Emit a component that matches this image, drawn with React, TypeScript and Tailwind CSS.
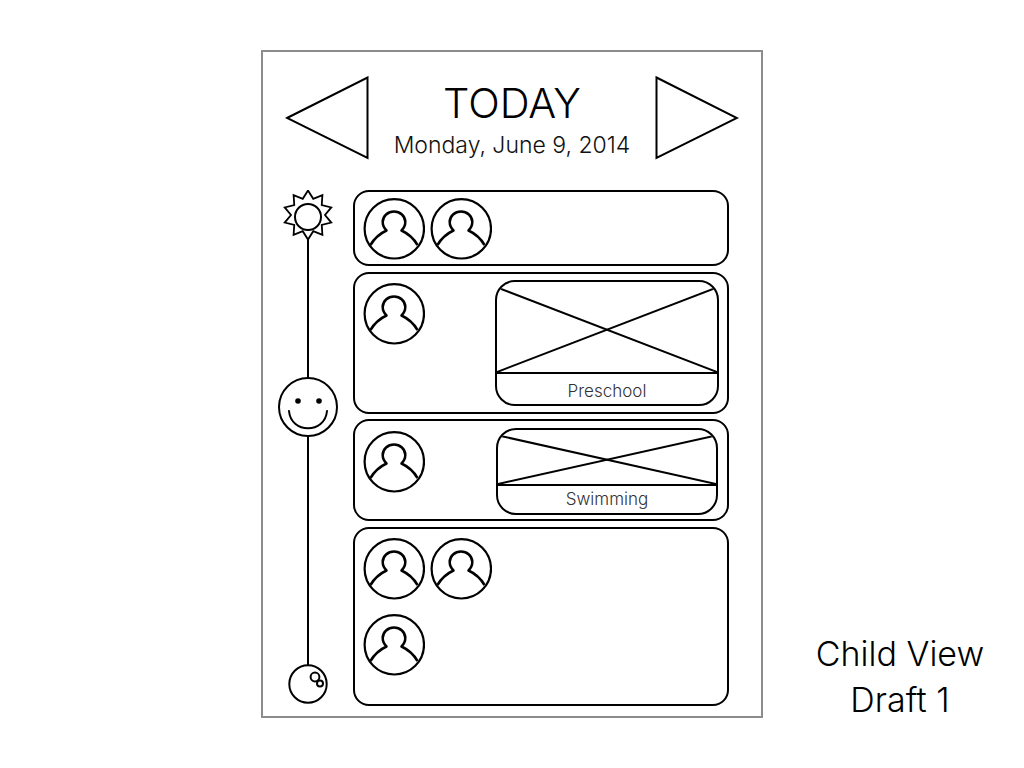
const font = "font-['Inter','Liberation_Sans',sans-serif] font-light";

function Avatar({ className = "" }: { className?: string }) {
  return (
    <svg width="62" height="62" viewBox="0 0 62 62" fill="none" stroke="#000" strokeWidth="2.2" className={`shrink-0 ${className}`}>
      <circle cx="31.3" cy="30.8" r="29.7" />
      <path d="M7.5 47 C11 41 17 35.5 23.5 32.5 C21 30 19.7 27 19.7 24 C19.7 18 25 13.5 31 13.5 C37 13.5 42.3 18 42.3 24 C42.3 27 41 30 38.5 32.5 C45 35.5 51 41 54.5 47" strokeLinejoin="round" strokeWidth="2.5" />
    </svg>
  );
}

function Placeholder({ label, w, h, imageH, top, labelClass }: { label: string; w: string; h: string; imageH: string; top: number; labelClass: string }) {
  return (
    <div className={`${w} ${h} shrink-0 flex flex-col border-2 border-black rounded-[20px] overflow-hidden`}>
      <div className={`${imageH} border-b-2 border-black shrink-0`}>
        <svg width="100%" height="100%" viewBox="0 0 220 100" preserveAspectRatio="none" fill="none" stroke="#000" strokeWidth="2">
          <line x1="0" y1={top} x2="220" y2="100" vectorEffect="non-scaling-stroke" />
          <line x1="220" y1={top} x2="0" y2="100" vectorEffect="non-scaling-stroke" />
        </svg>
      </div>
      <div className={`flex-1 flex items-center justify-center text-[17px] leading-none text-[#333] ${labelClass} ${font}`}>{label}</div>
    </div>
  );
}

function Rail() {
  const pts: string[] = [];
  const n = 10;
  for (let i = 0; i < n * 2; i++) {
    const r = i % 2 === 0 ? 24.5 : 17;
    const a = (Math.PI * i) / n - Math.PI / 2;
    pts.push(`${44 + r * Math.cos(a)},${25 + r * Math.sin(a)}`);
  }
  return (
    <svg width="90" height="516" viewBox="-1 0 90 516" fill="none" stroke="#000" strokeWidth="2" className="shrink-0">
      <line x1="44" y1="48" x2="44" y2="188" />
      <line x1="44" y1="246" x2="44" y2="475" />
      <polygon points={pts.join(" ")} strokeWidth="1.8" />
      <circle cx="44" cy="27" r="13" />
      <circle cx="44" cy="217" r="29" />
      <circle cx="34" cy="211" r="2.8" fill="#000" stroke="none" />
      <circle cx="55" cy="211" r="2.8" fill="#000" stroke="none" />
      <path d="M25 221 C27 244 61 244 63 221" strokeLinecap="round" />
      <circle cx="44" cy="494" r="18.7" />
      <circle cx="51" cy="487" r="4.4" />
      <circle cx="56" cy="493.5" r="3" />
    </svg>
  );
}

export default function App() {
  return (
    <div className="w-[1024px] h-[768px] bg-white flex overflow-hidden">
      <div className="ml-[261px] mt-[50px] w-[502px] h-[668px] shrink-0 border-2 border-[#8a8c8e] flex flex-col">
        <div className="flex items-start px-[22px] pt-[24px] h-[138px] shrink-0">
          <svg width="84" height="84" viewBox="0 0 84 84" fill="none" stroke="#000" strokeWidth="2" className="shrink-0">
            <polygon points="2,42 82.5,1.5 82.5,82" />
          </svg>
          <div className={`flex-1 flex flex-col items-center text-black ${font}`}>
            <div className="text-[41.5px] leading-[52px] mt-[1px]">TODAY</div>
            <div className="text-[23px] leading-[30px] mt-[1px] text-[#111]">Monday, June 9, 2014</div>
          </div>
          <svg width="84" height="84" viewBox="0 0 84 84" fill="none" stroke="#000" strokeWidth="2" className="shrink-0">
            <polygon points="1.5,1.5 82,42 1.5,82" />
          </svg>
        </div>
        <div className="flex">
          <Rail />
          <div className="flex flex-col w-[376px]">
            <div className="h-[76px] border-2 border-black rounded-[16px] pl-2 pt-[6px] flex gap-[5px]">
              <Avatar />
              <Avatar />
            </div>
            <div className="mt-[6px] h-[142px] border-2 border-black rounded-[16px] pl-2 pr-2 pt-[6px] flex justify-between">
              <Avatar className="mt-[3px]" />
              <Placeholder label="Preschool" w="w-[224px]" h="h-[126px]" imageH="h-[92px]" top={6} labelClass="pt-[5px]" />
            </div>
            <div className="mt-[5px] h-[102px] border-2 border-black rounded-[16px] pl-2 pr-[9px] pt-[7px] flex justify-between">
              <Avatar className="mt-[3px]" />
              <Placeholder label="Swimming" w="w-[222px]" h="h-[87px]" imageH="h-[56px]" top={10} labelClass="pt-0" />
            </div>
            <div className="mt-[6px] h-[179px] border-2 border-black rounded-[16px] pl-2 pt-[9px] flex flex-col gap-[14px]">
              <div className="flex gap-[5px]">
                <Avatar />
                <Avatar />
              </div>
              <Avatar />
            </div>
          </div>
        </div>
      </div>
      <div className={`flex-1 flex flex-col items-center justify-end pl-[13px] pb-[45px] text-[34px] leading-[46px] text-black ${font}`}>
        <div>Child View</div>
        <div>Draft 1</div>
      </div>
    </div>
  );
}
